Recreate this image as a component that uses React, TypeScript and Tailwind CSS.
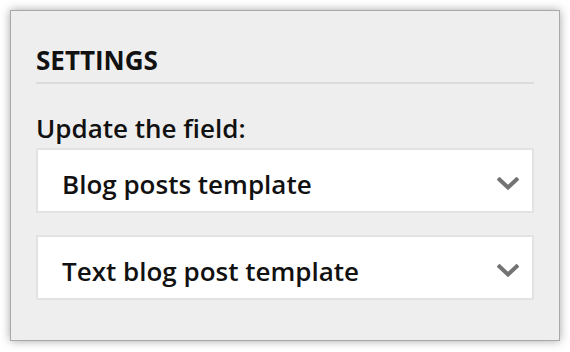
import React from "react";

const fields = ["Blog posts template", "Text blog post template"];

function Chevron() {
  return (
    <svg width="22" height="14" viewBox="0 0 22 14" fill="none" className="shrink-0">
      <path d="M2.5 2.5 L11 10.5 L19.5 2.5" stroke="#737373" strokeWidth="4" strokeLinecap="square" />
    </svg>
  );
}

function FieldSelect({ label }: { label: string }) {
  return (
    <div className="flex h-[65px] items-center justify-between border-2 border-[#e3e3e3] bg-white pt-[7px] pl-[24px] pr-[13px]">
      <span className="text-[26px] font-semibold leading-[32px] text-[#111]">{label}</span>
      <Chevron />
    </div>
  );
}

export default function App() {
  return (
    <div className="bg-white p-[10px] font-['Open_Sans',sans-serif]">
      <div className="h-[331px] border border-[#a8a8a8] bg-[#eeeeee] px-[25px] pt-[33px] shadow-[0_0_9px_rgba(0,0,0,0.35)]">
        <h2 className="border-b-2 border-[#dcdcdc] pb-[6px] text-[26px] font-bold leading-[32px] text-[#111]">SETTINGS</h2>
        <p className="mt-[28px] text-[26px] font-semibold leading-[32px] text-[#111]">Update the field:</p>
        <div className="mt-[4px] flex flex-col gap-[22px]">
          {fields.map((f) => (
            <FieldSelect key={f} label={f} />
          ))}
        </div>
      </div>
    </div>
  );
}
